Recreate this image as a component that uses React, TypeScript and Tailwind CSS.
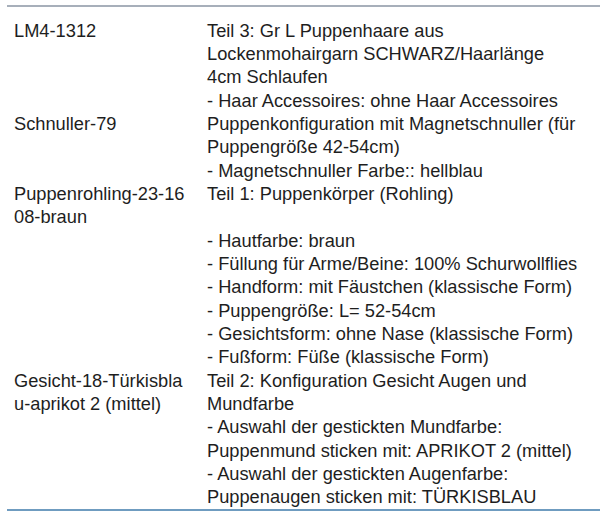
const rows: { code: string[]; lines: string[] }[] = [
  {
    code: ["LM4-1312"],
    lines: [
      "Teil 3: Gr L Puppenhaare aus",
      "Lockenmohairgarn SCHWARZ/Haarlänge",
      "4cm Schlaufen",
      "- Haar Accessoires: ohne Haar Accessoires",
    ],
  },
  {
    code: ["Schnuller-79"],
    lines: [
      "Puppenkonfiguration mit Magnetschnuller (für",
      "Puppengröße 42-54cm)",
      "- Magnetschnuller Farbe:: hellblau",
    ],
  },
  {
    code: ["Puppenrohling-23-16", "08-braun"],
    lines: [
      "Teil 1: Puppenkörper (Rohling)",
      "",
      "- Hautfarbe: braun",
      "- Füllung für Arme/Beine: 100% Schurwollflies",
      "- Handform: mit Fäustchen (klassische Form)",
      "- Puppengröße: L= 52-54cm",
      "- Gesichtsform: ohne Nase (klassische Form)",
      "- Fußform: Füße (klassische Form)",
    ],
  },
  {
    code: ["Gesicht-18-Türkisbla", "u-aprikot 2 (mittel)"],
    lines: [
      "Teil 2: Konfiguration Gesicht Augen und",
      "Mundfarbe",
      "- Auswahl der gestickten Mundfarbe:",
      "Puppenmund sticken mit: APRIKOT 2 (mittel)",
      "- Auswahl der gestickten Augenfarbe:",
      "Puppenaugen sticken mit: TÜRKISBLAU",
    ],
  },
]

export default function App() {
  return (
    <div className="w-[600px] h-[519px] bg-white pt-[5px] pl-[7px] overflow-hidden font-['Liberation_Sans',Arial,sans-serif] text-[18.25px] leading-[23.35px] text-[#1e1e1e]">
      <div className="border-t-2 border-[#a7afba] border-b-2 border-b-[#6f9cc0] pt-[11.5px] pb-0">
        {rows.map((row, i) => (
          <div key={i} className="grid grid-cols-[200px_1fr]">
            <div className="pl-[7px]">
              {row.code.map((c, j) => (
                <div key={j} className="whitespace-nowrap">{c}</div>
              ))}
            </div>
            <div>
              {row.lines.map((l, j) => (
                <div key={j} className="whitespace-nowrap h-[23.35px]">{l}</div>
              ))}
            </div>
          </div>
        ))}
      </div>
    </div>
  )
}
